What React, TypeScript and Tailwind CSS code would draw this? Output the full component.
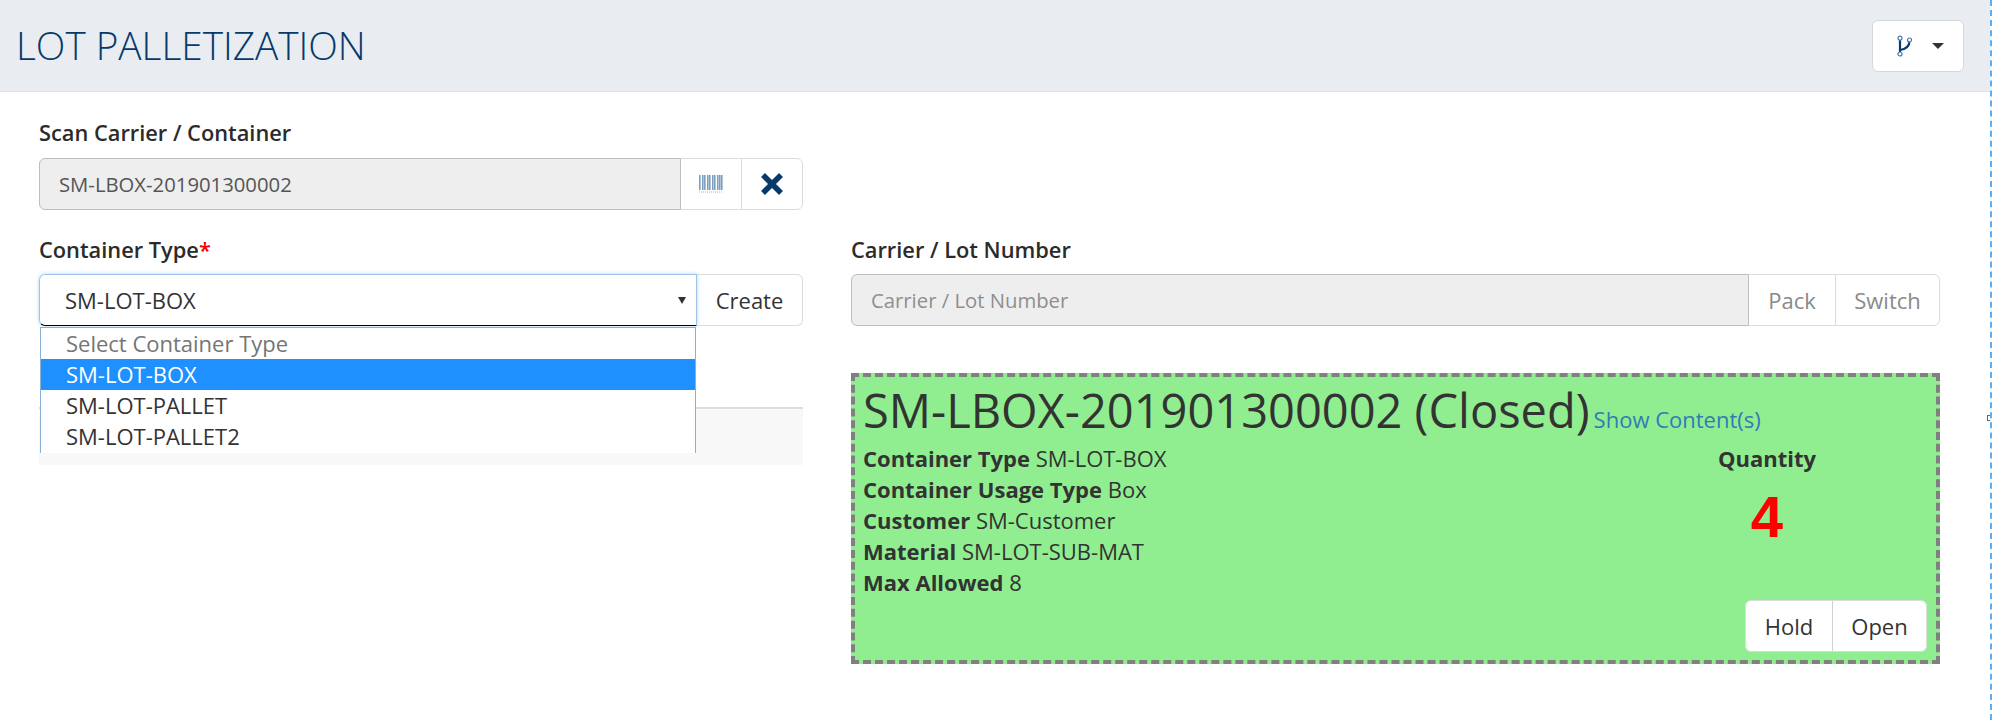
const font = "font-['Open_Sans',sans-serif]";

function BranchIcon() {
  return (
    <svg width="15" height="22" viewBox="0 0 15 22" fill="none" className="block">
      <path d="M3 4V18" stroke="#0b3a6e" strokeWidth="2.2" />
      <path d="M3 15C9 14 12.5 11 12.5 6" stroke="#0b3a6e" strokeWidth="2.2" />
      <circle cx="3" cy="3.2" r="2" fill="#fff" stroke="#3f78ad" strokeWidth="1.2" />
      <circle cx="12.5" cy="5" r="2" fill="#fff" stroke="#3f78ad" strokeWidth="1.2" />
      <circle cx="3" cy="19" r="2" fill="#fff" stroke="#3f78ad" strokeWidth="1.2" />
    </svg>
  );
}

function BarcodeIcon() {
  const bars = [0, 3, 5, 8, 10, 13, 15, 18, 20, 22];
  return (
    <svg width="24" height="18" viewBox="0 0 24 18" className="block">
      {bars.map((x) => (
        <rect key={x} x={x} y="0" width="1.6" height="15" fill="#7f9fc0" />
      ))}
      <path d="M0 17H24" stroke="#9db5cf" strokeWidth="1" strokeDasharray="1 1" />
    </svg>
  );
}

function Label({ children }: { children: React.ReactNode }) {
  return <div className="text-[21.8px] leading-[30px] font-semibold text-[#2b2b2b]">{children}</div>;
}

function Detail({ name, value }: { name: string; value: string }) {
  return (
    <div>
      <span className="font-bold">{name}</span> {value}
    </div>
  );
}

const options = ["Select Container Type", "SM-LOT-BOX", "SM-LOT-PALLET", "SM-LOT-PALLET2"];

export default function App() {
  return (
    <div className={`${font} relative h-[720px] w-[1992px] overflow-hidden border-r-2 border-dashed border-[#5aaef5] bg-white text-[#333]`}>
      <header className="flex h-[92px] items-center justify-between border-b border-[#dfe2e6] bg-[#e9ecf1] pr-[26px] pl-[16px]">
        <h1 className="text-[38.7px] font-light text-[#063a6b]">LOT PALLETIZATION</h1>
        <button className="flex h-[52px] w-[92px] items-center justify-center gap-[20px] rounded-[6px] border border-[#d5d7da] bg-white pl-[4px]">
          <BranchIcon />
          <span className="h-0 w-0 border-x-[6px] border-t-[6px] border-x-transparent border-t-[#333]" />
        </button>
      </header>

      <main className="pt-[26px] pl-[39px]">
        <section className="w-[764px]">
          <Label>Scan Carrier / Container</Label>
          <div className="mt-[10px] flex h-[52px]">
            <div className="flex flex-1 items-center rounded-l-[6px] border border-[#bdbdbd] bg-[#eeeeee] pl-[19px] text-[20.3px] text-[#555]">
              SM-LBOX-201901300002
            </div>
            <div className="flex w-[60px] items-center justify-center border-y border-[#dcdcdc]">
              <BarcodeIcon />
            </div>
            <div className="flex w-[62px] items-center justify-center rounded-r-[6px] border border-[#dcdcdc]">
              <svg width="24" height="24" viewBox="0 0 24 24" className="block">
                <path d="M3 3L21 21M21 3L3 21" stroke="#063a6b" strokeWidth="5.5" />
              </svg>
            </div>
          </div>
        </section>

        <div className="mt-[25px] flex gap-[48px]">
          <section className="w-[764px]">
            <Label>
              Container Type<span className="text-[#f00]">*</span>
            </Label>
            <div className="relative mt-[9px]">
              <div className="flex h-[52px]">
                <div className="flex w-[658px] items-center justify-between rounded-l-[6px] border border-[#9cc4e8] border-b-black pr-[10px] pl-[25px] text-[22px] shadow-[0_0_4px_#b5d5f2]">
                  SM-LOT-BOX
                  <span className="h-0 w-0 border-x-[4px] border-t-[7px] border-x-transparent border-t-[#333]" />
                </div>
                <div className="flex flex-1 items-center justify-center rounded-r-[6px] border-y border-r border-[#dcdcdc] text-[22px]">
                  Create
                </div>
              </div>
              <div className="mt-[81px] h-[58px] border-t-2 border-[#dddddd] bg-[#f8f8f8]" />
              <ul className="absolute top-[53px] left-[1px] h-[126px] w-[656px] overflow-hidden border-x border-t border-[#8ab2d6] bg-white text-[22px] leading-[31px]">
                {options.map((o, i) => (
                  <li
                    key={o}
                    className={
                      i === 0
                        ? "pl-[25px] text-[#757575]"
                        : i === 1
                          ? "bg-[#1e90ff] pl-[25px] text-white"
                          : "pl-[25px] text-[#333]"
                    }
                  >
                    {o}
                  </li>
                ))}
              </ul>
            </div>
          </section>

          <section className="w-[1089px]">
            <Label>Carrier / Lot Number</Label>
            <div className="mt-[9px] flex h-[52px]">
              <div className="flex flex-1 items-center rounded-l-[6px] border border-[#bdbdbd] bg-[#eeeeee] pl-[19px] text-[20.3px] text-[#8f8f8f]">
                Carrier / Lot Number
              </div>
              <div className="flex w-[86px] items-center justify-center border-y border-[#dcdcdc] text-[22px] text-[#8a8a8a]">Pack</div>
              <div className="flex w-[105px] items-center justify-center rounded-r-[6px] border border-[#dcdcdc] text-[22px] text-[#8a8a8a]">
                Switch
              </div>
            </div>

            <div className="mt-[47px] flex h-[291px] flex-col border-4 border-dashed border-[#808080] bg-[#90ee90] pt-[1px] pr-[9px] pl-[8px]">
              <div className="flex items-baseline gap-[4px]">
                <span className="text-[47px] leading-[65px] text-[#333]">SM-LBOX-201901300002 (Closed)</span>
                <span className="text-[22px] text-[#337ab7]">Show Content(s)</span>
              </div>
              <div className="flex">
                <div className="flex-1 text-[22px] leading-[31px]">
                  <Detail name="Container Type" value="SM-LOT-BOX" />
                  <Detail name="Container Usage Type" value="Box" />
                  <Detail name="Customer" value="SM-Customer" />
                  <Detail name="Material" value="SM-LOT-SUB-MAT" />
                  <Detail name="Max Allowed" value="8" />
                </div>
                <div className="mr-[60px] flex w-[200px] flex-col items-center">
                  <div className="text-[22px] leading-[31px] font-bold">Quantity</div>
                  <div className="mt-[10px] font-['Liberation_Sans',sans-serif] text-[58px] leading-[66px] font-bold text-[#f00]">4</div>
                </div>
              </div>
              <div className="mt-auto mb-[8px] flex justify-end">
                <div className="flex h-[52px] w-[182px] rounded-[6px] border border-[#dcdcdc] bg-white text-[22px]">
                  <div className="flex w-[87px] items-center justify-center border-r border-[#cfcfcf]">Hold</div>
                  <div className="flex flex-1 items-center justify-center">Open</div>
                </div>
              </div>
            </div>
          </section>
        </div>
      </main>

      <div className="absolute top-[415px] right-[-2px] h-[6px] w-[5px] border border-[#666] bg-white" />
    </div>
  );
}
